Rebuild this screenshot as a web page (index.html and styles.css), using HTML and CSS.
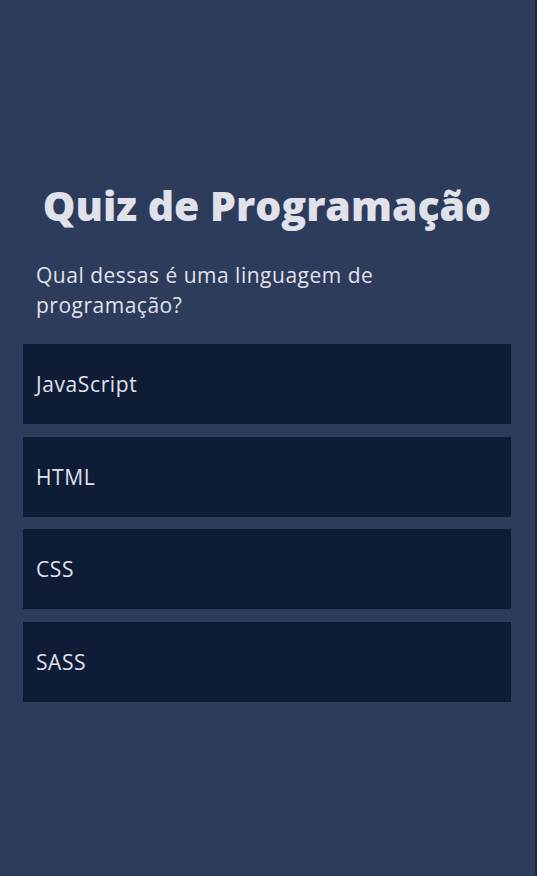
FILE: index.html
```html
<!DOCTYPE html>
<html lang="pt-BR">
<head>
<meta charset="utf-8">
<title>Quiz de Programação</title>
<link rel="stylesheet" href="styles.css">
</head>
<body>
<main class="app">
  <section class="quiz">
    <h1 class="quiz-title">Quiz de Programação</h1>
    <p class="quiz-question">Qual dessas é uma linguagem de programação?</p>
    <div class="answers">
      <button class="answer">JavaScript</button>
      <button class="answer">HTML</button>
      <button class="answer">CSS</button>
      <button class="answer">SASS</button>
    </div>
  </section>
</main>
</body>
</html>
```

FILE: styles.css
```css
* { box-sizing: border-box; }
html, body {
  margin: 0;
  padding: 0;
  height: 100%;
}
body {
  background: #2d3c5a;
  font-family: "Open Sans", "DejaVu Sans", sans-serif;
  color: #e1e1ec;
}
.app {
  min-height: 100%;
  border-right: 2px solid #1f2636;
  padding: 170px 24px 0 23px;
}
.quiz-title {
  margin: 0;
  text-align: center;
  font-size: 41px;
  font-weight: 800;
  line-height: 70px;
  letter-spacing: 0;
}
.quiz-question {
  margin: 20px 0 24px;
  padding: 0 13px;
  max-width: 440px;
  font-size: 21px;
  line-height: 30px;
  letter-spacing: 0.5px;
}
.answers {
  display: flex;
  flex-direction: column;
  gap: 12.6px;
}
.answer {
  display: flex;
  align-items: center;
  height: 80px;
  padding: 0 13px;
  background: #0f1c36;
  border: none;
  color: #e1e1ec;
  font-family: inherit;
  font-size: 21px;
  letter-spacing: 0.6px;
  text-align: left;
}
```
